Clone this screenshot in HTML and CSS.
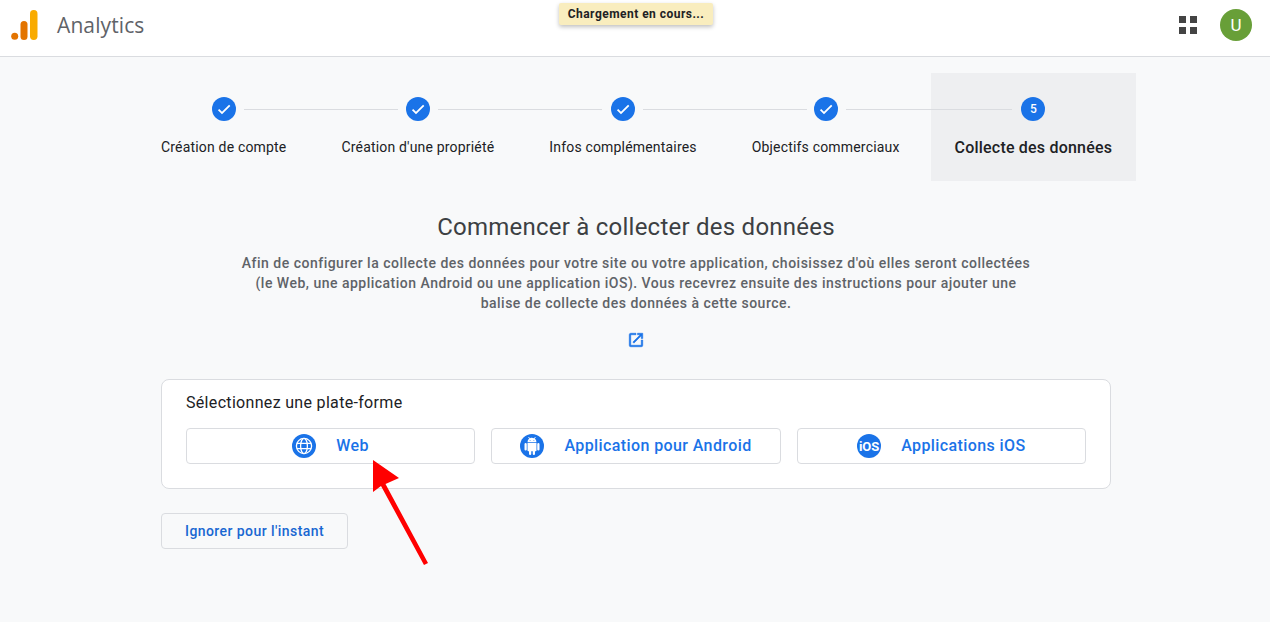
FILE: index.html
```html
<!DOCTYPE html>
<html lang="fr">
<head>
  <meta charset="UTF-8" />
  <title>Analytics</title>
  <link rel="stylesheet" href="styles.css">
</head>
<body>
  <!-- Barre du haut -->
  <header class="topbar">
    <div class="brand">
      <svg class="brand-logo" width="28" height="30" viewBox="0 0 28 30">
        <circle cx="3.7" cy="26.3" r="3.5" fill="#e37400"/>
        <rect x="9.500" y="11" width="7" height="19" rx="3.5" fill="#e37400"/>
        <rect x="19" y="0" width="7.5" height="30" rx="3.7" fill="#f9ab00"/>
      </svg>
      <span class="brand-name">Analytics</span>
    </div>
    <div class="topbar-right">
      <div class="apps">
        <span></span><span></span><span></span><span></span>
      </div>
      <div class="avatar">U</div>
    </div>
  </header>

  <div class="toast">Chargement en cours...</div>

  <main class="page">
    <!-- Etapes -->
    <ol class="stepper">
      <li class="step">
        <span class="step-circle"><svg width="16" height="16" viewBox="0 0 24 24"><path d="M9 16.2 4.8 12l-1.9 1.9L9 20 21.500 7.500 19.600 5.600z" fill="#fff"/></svg></span>
        <span class="step-line line-1"></span>
        <span class="step-label">Création de compte</span>
      </li>
      <li class="step">
        <span class="step-circle"><svg width="16" height="16" viewBox="0 0 24 24"><path d="M9 16.2 4.8 12l-1.9 1.9L9 20 21.500 7.500 19.600 5.600z" fill="#fff"/></svg></span>
        <span class="step-line line-2"></span>
        <span class="step-label">Création d'une propriété</span>
      </li>
      <li class="step">
        <span class="step-circle"><svg width="16" height="16" viewBox="0 0 24 24"><path d="M9 16.2 4.8 12l-1.9 1.9L9 20 21.500 7.500 19.600 5.600z" fill="#fff"/></svg></span>
        <span class="step-line line-3"></span>
        <span class="step-label">Infos complémentaires</span>
      </li>
      <li class="step">
        <span class="step-circle"><svg width="16" height="16" viewBox="0 0 24 24"><path d="M9 16.2 4.8 12l-1.9 1.9L9 20 21.500 7.500 19.600 5.600z" fill="#fff"/></svg></span>
        <span class="step-line line-4"></span>
        <span class="step-label">Objectifs commerciaux</span>
      </li>
      <li class="step active">
        <span class="step-circle">5</span>
        <span class="step-label">Collecte des données</span>
      </li>
    </ol>

    <section class="intro">
      <h1>Commencer à collecter des données</h1>
      <p>Afin de configurer la collecte des données pour votre site ou votre application, choisissez d'où elles seront collectées (le Web, une application Android ou une application iOS). Vous recevrez ensuite des instructions pour ajouter une balise de collecte des données à cette source.</p>
      <svg class="ext-link" width="18" height="18" viewBox="0 0 24 24"><path d="M19 19H5V5h7V3H5a2 2 0 0 0-2 2v14a2 2 0 0 0 2 2h14a2 2 0 0 0 2-2v-7h-2v7zM14 3v2h3.6l-9.800 9.800 1.400 1.400L19 6.400V10h2V3h-7z" fill="#1a73e8" stroke="#1a73e8" stroke-width="0.7"/></svg>
    </section>

    <!-- Choix de la plate-forme -->
    <section class="card">
      <h2>Sélectionnez une plate-forme</h2>
      <div class="platforms">
        <button class="platform">
          <span class="platform-icon">
            <svg width="18" height="18" viewBox="0 0 18 18" fill="none" stroke="#fff" stroke-width="1.3"><circle cx="9" cy="9" r="7.600"/><ellipse cx="9" cy="9" rx="3.400" ry="7.600"/><path d="M2 6.400h14M2 11.600h14"/></svg>
          </span>
          <span class="platform-name">Web</span>
        </button>
        <button class="platform">
          <span class="platform-icon">
            <svg width="18" height="18" viewBox="0 0 24 24"><path d="M6 18c0 .55.45 1 1 1h1v3.500a1.500 1.500 0 0 0 3 0V19h2v3.500a1.500 1.500 0 0 0 3 0V19h1c.55 0 1-.45 1-1V8H6v10zM3.500 8A1.500 1.500 0 0 0 2 9.500v7a1.500 1.500 0 0 0 3 0v-7A1.500 1.500 0 0 0 3.500 8zm17 0a1.500 1.500 0 0 0-1.500 1.500v7a1.500 1.500 0 0 0 3 0v-7A1.500 1.500 0 0 0 20.500 8zm-4.970-5.840 1.300-1.300a.5.5 0 0 0-.7-.7l-1.480 1.480A5.800 5.800 0 0 0 12 1c-.96 0-1.860.23-2.660.63L7.850.15a.5.5 0 0 0-.7.7l1.310 1.310A5.980 5.980 0 0 0 6 7h12a5.980 5.980 0 0 0-2.470-4.840zM10 5H9V4h1v1zm5 0h-1V4h1v1z" fill="#fff"/></svg>
          </span>
          <span class="platform-name">Application pour Android</span>
        </button>
        <button class="platform">
          <span class="platform-icon ios">iOS</span>
          <span class="platform-name">Applications iOS</span>
        </button>
      </div>
    </section>

    <button class="skip">Ignorer pour l'instant</button>
  </main>

  <!-- Fleche rouge par-dessus la page -->
  <svg class="arrow" width="70" height="120" viewBox="0 0 70 120">
    <path d="M3 1 29 19 15.500 25 58 104 54 106 11 27 3 33z" fill="#ff0000"/>
  </svg>
</body>
</html>
```

FILE: styles.css
```css
/* Mise en page generale */
html, body {
  height: 100%;
}

body {
  margin: 0;
  font-family: 'Roboto', sans-serif;
  background-color: #f8f9fa;
  color: #202124;
  overflow: hidden;
}

/* Barre du haut */
.topbar {
  height: 56px;
  background-color: #fff;
  border-bottom: 1px solid #dadce0;
  display: flex;
  justify-content: space-between;
  align-items: center;
  padding: 0 18px 0 11px;
}

.brand {
  display: flex;
  align-items: center;
  gap: 18px;
  margin-top: -6px;
}

.brand-name {
  font-size: 21px;
  letter-spacing: 0.1px;
  color: #5f6368;
  font-family: 'Open Sans', sans-serif;
}

.topbar-right {
  display: flex;
  align-items: center;
  gap: 23px;
  margin-top: -6px;
}

.apps {
  display: grid;
  grid-template-columns: 7px 7px;
  grid-auto-rows: 7px;
  gap: 4px;
}

.apps span {
  background-color: #444;
}

.avatar {
  width: 32px;
  height: 32px;
  border-radius: 50%;
  background-color: #689f38;
  color: #fff;
  font-size: 17px;
  display: flex;
  align-items: center;
  justify-content: center;
}

/* Message de chargement */
.toast {
  position: absolute;
  top: 3px;
  left: 559px;
  width: 154px;
  height: 22px;
  line-height: 22px;
  text-align: center;
  background-color: #f9edbe;
  border-radius: 2px;
  box-shadow: 0 2px 4px rgba(0,0,0,0.25);
  font-size: 12px;
  font-weight: 700;
  letter-spacing: 0.47px;
}

/* Contenu */
.page {
  width: 950px;
  margin-left: 161px;
  padding-top: 16px;
}

/* Etapes */
.stepper {
  list-style: none;
  margin: 0 -24px;
  padding: 0;
  display: flex;
  gap: 7px;
}

.step {
  position: relative;
  display: flex;
  flex-direction: column;
  align-items: center;
  padding: 24px;
}

.step-circle {
  width: 24px;
  height: 24px;
  border-radius: 50%;
  background-color: #1a73e8;
  color: #fff;
  font-size: 12px;
  font-weight: 500;
  display: flex;
  align-items: center;
  justify-content: center;
}

.step-line {
  position: absolute;
  z-index: 1;
  top: 36px;
  left: calc(50% + 20px);
  height: 1px;
  background-color: #dadce0;
}

.line-1 { width: 154px; }
.line-2 { width: 164px; }
.line-3 { width: 164px; }
.line-4 { width: 166px; }

.step-label {
  margin-top: 16px;
  font-size: 14px;
  line-height: 20px;
  letter-spacing: 0.18px;
  white-space: nowrap;
}

.step.active {
  background-color: #eeeff1;
}

.step.active .step-label {
  font-size: 16px;
  font-weight: 500;
  letter-spacing: 0.2px;
  padding-top: 1px;
  margin-bottom: -1px;
}

/* Introduction */
.intro {
  text-align: center;
  margin-top: 28px;
}

.intro h1 {
  margin: 0;
  font-size: 24px;
  line-height: 36px;
  font-weight: 400;
  letter-spacing: 0.24px;
  color: #3c4043;
}

.intro p {
  width: 795px;
  margin: 8px auto 0;
  font-size: 14px;
  line-height: 20px;
  font-weight: 500;
  letter-spacing: 0.49px;
  color: #5f6368;
}

.ext-link {
  display: block;
  margin: 18px auto 0;
}

/* Carte plate-forme */
.card {
  margin-top: 30px;
  height: 110px;
  box-sizing: border-box;
  padding: 12px 24px 0;
  background-color: #fff;
  border: 1px solid #dadce0;
  border-radius: 8px;
}

.card h2 {
  margin: 0 0 16px;
  padding-top: 1px;
  font-size: 16px;
  line-height: 19px;
  font-weight: 400;
  letter-spacing: 0.32px;
  color: #202124;
}

.platforms {
  display: flex;
  gap: 16px;
}

.platform {
  flex: 1;
  height: 36px;
  display: flex;
  align-items: center;
  justify-content: center;
  gap: 20px;
  background-color: #fff;
  border: 1px solid #dadce0;
  border-radius: 4px;
  color: #1a73e8;
  font-family: 'Roboto', sans-serif;
  font-size: 16px;
  font-weight: 500;
  letter-spacing: 0.4px;
  padding: 0;
}

.platform-name {
  margin-top: -2px;
}

.platform-icon {
  width: 24px;
  height: 24px;
  border-radius: 50%;
  background-color: #1a73e8;
  color: #fff;
  display: flex;
  align-items: center;
  justify-content: center;
}

.platform-icon.ios {
  font-size: 13px;
  font-weight: 700;
  letter-spacing: 0;
}

.skip {
  display: block;
  margin-top: 24px;
  height: 36px;
  padding: 0 23px;
  background-color: transparent;
  border: 1px solid #dadce0;
  border-radius: 4px;
  color: #1967d2;
  font-family: 'Roboto', sans-serif;
  font-size: 14px;
  font-weight: 500;
  letter-spacing: 0.43px;
}

.arrow {
  position: absolute;
  left: 370px;
  top: 459px;
}
```
